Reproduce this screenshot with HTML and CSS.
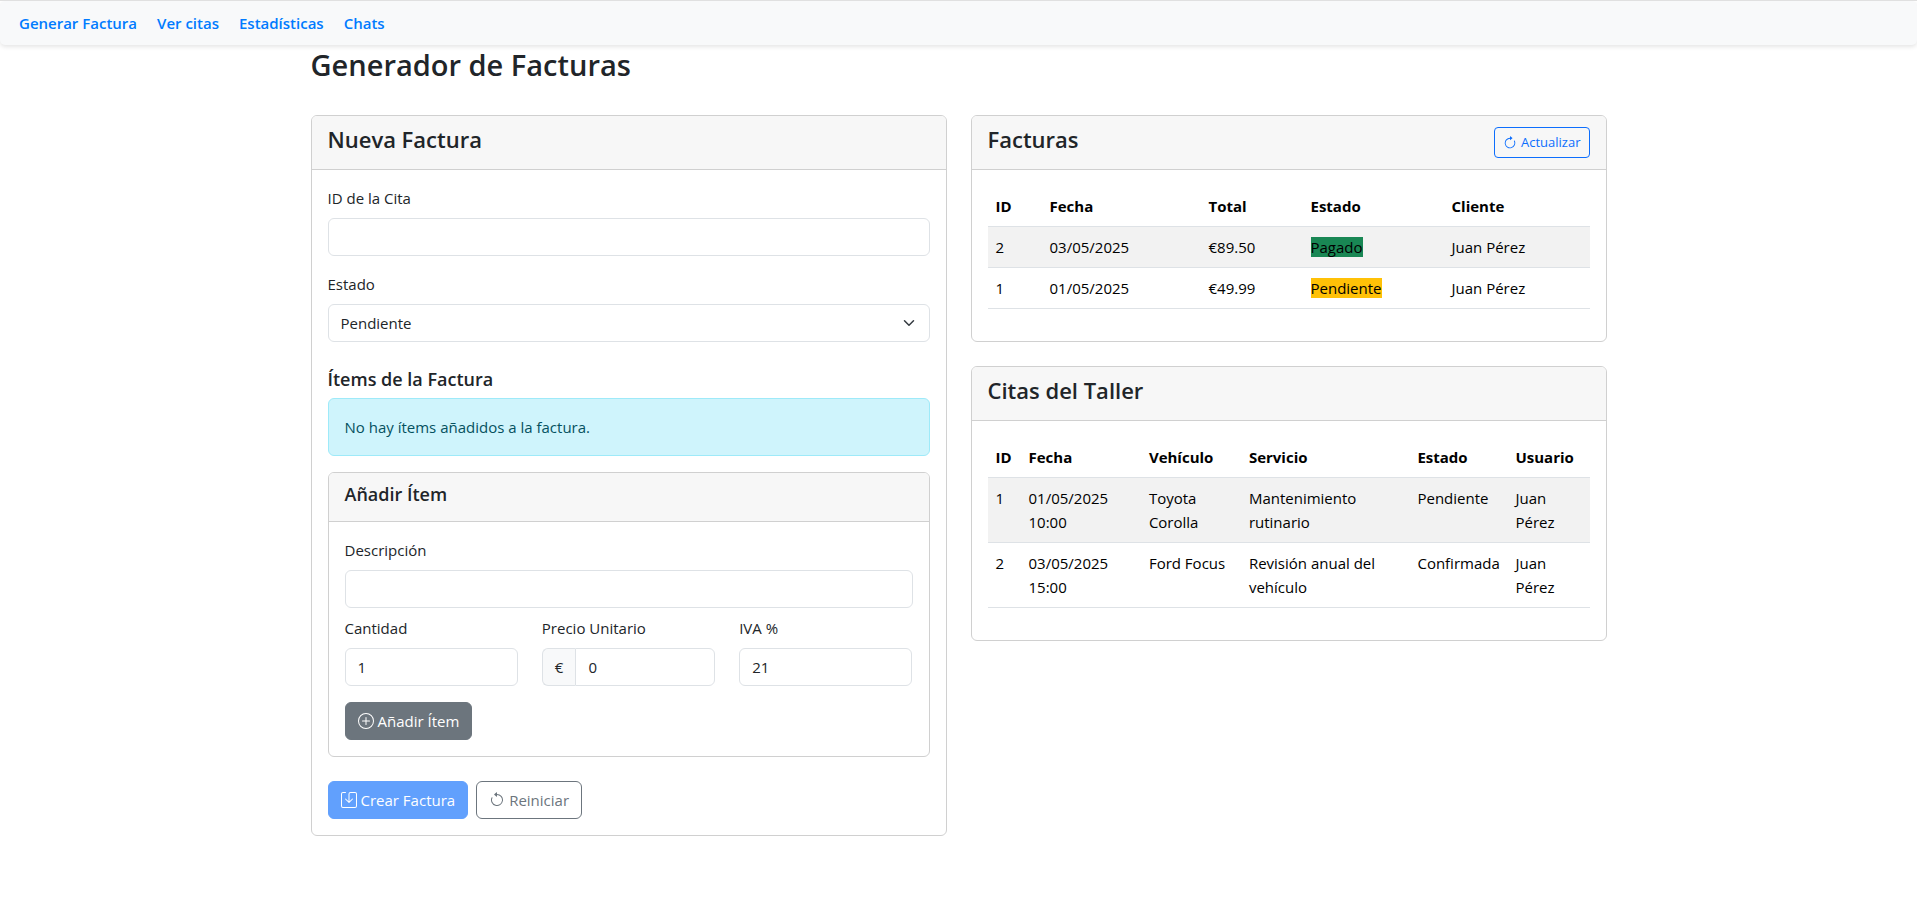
FILE: index.html
```html
<!DOCTYPE html>
<html lang="es">
<head>
<meta charset="utf-8">
<meta name="viewport" content="width=device-width, initial-scale=1">
<title>Generador de Facturas</title>
<link rel="stylesheet" href="styles.css">
</head>
<body>
<nav class="navbar">
  <a href="#generar">Generar Factura</a>
  <a href="#citas">Ver citas</a>
  <a href="#estadisticas">Estadísticas</a>
  <a href="#chats">Chats</a>
</nav>
<main class="container">
  <h1 class="page-title">Generador de Facturas</h1>
  <div class="row">
    <section class="card">
      <header class="card-header"><h2 class="card-title">Nueva Factura</h2></header>
      <form class="card-body">
        <div class="field">
          <label for="cita">ID de la Cita</label>
          <input class="control" id="cita" type="text">
        </div>
        <div class="field">
          <label for="estado">Estado</label>
          <div class="select-wrap">
            <select class="control select" id="estado">
              <option>Pendiente</option>
              <option>Pagado</option>
            </select>
            <svg class="chevron" viewBox="0 0 16 16" aria-hidden="true"><path fill="none" stroke="#343a40" stroke-linecap="round" stroke-linejoin="round" stroke-width="2" d="m2 5 6 6 6-6"/></svg>
          </div>
        </div>
        <div class="items">
          <h3 class="subtitle">Ítems de la Factura</h3>
          <div class="alert">No hay ítems añadidos a la factura.</div>
          <div class="card">
            <header class="card-header"><h3 class="subtitle">Añadir Ítem</h3></header>
            <div class="card-body">
              <div class="field field-tight">
                <label for="descripcion">Descripción</label>
                <input class="control" id="descripcion" type="text">
              </div>
              <div class="field-row">
                <div class="field">
                  <label for="cantidad">Cantidad</label>
                  <input class="control" id="cantidad" type="text" inputmode="numeric" value="1">
                </div>
                <div class="field">
                  <label for="precio">Precio Unitario</label>
                  <div class="input-group">
                    <span class="input-addon">€</span>
                    <input class="control" id="precio" type="text" inputmode="decimal" value="0">
                  </div>
                </div>
                <div class="field">
                  <label for="iva">IVA %</label>
                  <input class="control" id="iva" type="text" inputmode="decimal" value="21">
                </div>
              </div>
              <button class="btn btn-secondary" type="button">
                <svg class="icon" viewBox="0 0 16 16" aria-hidden="true"><path d="M8 15A7 7 0 1 1 8 1a7 7 0 0 1 0 14m0 1A8 8 0 1 0 8 0a8 8 0 0 0 0 16"/><path d="M8 4a.5.5 0 0 1 .5.5v3h3a.5.5 0 0 1 0 1h-3v3a.5.5 0 0 1-1 0v-3h-3a.5.5 0 0 1 0-1h3v-3A.5.5 0 0 1 8 4"/></svg>
                Añadir Ítem
              </button>
            </div>
          </div>
        </div>
        <div class="actions">
          <button class="btn btn-primary" type="submit" disabled>
            <svg class="icon" viewBox="0 0 16 16" aria-hidden="true"><path d="M2 1a1 1 0 0 0-1 1v12a1 1 0 0 0 1 1h12a1 1 0 0 0 1-1V2a1 1 0 0 0-1-1H9.500a1 1 0 0 0-1 1v7.293l2.646-2.647a.5.5 0 0 1 .708.708l-3.500 3.500a.5.5 0 0 1-.708 0l-3.500-3.500a.5.5 0 1 1 .708-.708L7.500 9.293V2a2 2 0 0 1 2-2H14a2 2 0 0 1 2 2v12a2 2 0 0 1-2 2H2a2 2 0 0 1-2-2V2a2 2 0 0 1 2-2h2.500a.5.5 0 0 1 0 1z"/></svg>
            Crear Factura
          </button>
          <button class="btn btn-outline-secondary" type="reset">
            <svg class="icon" viewBox="0 0 16 16" aria-hidden="true"><path fill-rule="evenodd" d="M8 3a5 5 0 1 1-4.546 2.914.5.5 0 0 0-.908-.417A6 6 0 1 0 8 2z"/><path d="M8 4.466V.534a.25.25 0 0 0-.41-.192L5.230 2.308a.25.25 0 0 0 0 .384l2.360 1.966A.25.25 0 0 0 8 4.466"/></svg>
            Reiniciar
          </button>
        </div>
      </form>
    </section>

    <div class="column">
      <section class="card">
        <header class="card-header">
          <h2 class="card-title">Facturas</h2>
          <button class="btn btn-sm btn-outline-primary" type="button">
            <svg class="icon" viewBox="0 0 16 16" aria-hidden="true"><path fill-rule="evenodd" d="M8 3a5 5 0 1 0 4.546 2.914.5.5 0 0 1 .908-.417A6 6 0 1 1 8 2z"/><path d="M8 4.466V.534a.25.25 0 0 1 .41-.192l2.360 1.966c.12.1.12.284 0 .384L8.410 4.658A.25.25 0 0 1 8 4.466"/></svg>
            Actualizar
          </button>
        </header>
        <div class="card-body">
          <table class="table invoices">
            <thead>
              <tr><th scope="col">ID</th><th scope="col">Fecha</th><th scope="col">Total</th><th scope="col">Estado</th><th scope="col">Cliente</th></tr>
            </thead>
            <tbody>
              <tr><td>2</td><td>03/05/2025</td><td>€89.50</td><td><span class="bg-success">Pagado</span></td><td>Juan Pérez</td></tr>
              <tr><td>1</td><td>01/05/2025</td><td>€49.99</td><td><span class="bg-warning">Pendiente</span></td><td>Juan Pérez</td></tr>
            </tbody>
          </table>
        </div>
      </section>
      <section class="card">
        <header class="card-header"><h2 class="card-title">Citas del Taller</h2></header>
        <div class="card-body">
          <table class="table appointments">
            <thead>
              <tr><th scope="col">ID</th><th scope="col">Fecha</th><th scope="col">Vehículo</th><th scope="col">Servicio</th><th scope="col">Estado</th><th scope="col">Usuario</th></tr>
            </thead>
            <tbody>
              <tr><td>1</td><td>01/05/2025 10:00</td><td>Toyota Corolla</td><td>Mantenimiento rutinario</td><td>Pendiente</td><td>Juan Pérez</td></tr>
              <tr><td>2</td><td>03/05/2025 15:00</td><td>Ford Focus</td><td>Revisión anual del vehículo</td><td>Confirmada</td><td>Juan Pérez</td></tr>
            </tbody>
          </table>
        </div>
      </section>
    </div>
  </div>
</main>
</body>
</html>
```
FILE: styles.css
```css
*, *::before, *::after { box-sizing: border-box; }

body {
  margin: 0;
  border-top: 1px solid #e0e0e0;
  background: #fff;
  color: #212529;
  font-family: "Segoe UI", "Open Sans", "Noto Sans", sans-serif;
  font-size: 15px;
  line-height: 24px;
}

h1, h2, h3 { margin: 0; font-weight: 600; }

.navbar {
  display: flex;
  gap: 20px;
  padding: 10px 19px;
  border-radius: 5px;
  background: #f8f9fa;
  box-shadow: 0 2px 4px rgba(0, 0, 0, .1);
}
.navbar a {
  color: #007bff;
  font-weight: 600;
  font-size: 15px;
  text-decoration: none;
}

.container {
  max-width: 1320px;
  margin: 0 auto;
  padding: 0 12px;
}
.page-title {
  margin-bottom: 30px;
  font-size: 29px;
  line-height: 40px;
}

.row {
  display: grid;
  grid-template-columns: 1fr 1fr;
  align-items: start;
  gap: 24px;
}
.column { display: grid; gap: 24px; }

.card {
  border: 1px solid #d0d0d0;
  border-radius: 6px;
  background: #fff;
}
.card-header {
  display: flex;
  justify-content: space-between;
  align-items: center;
  padding: 8px 16px;
  border-bottom: 1px solid #d0d0d0;
  border-radius: 5px 5px 0 0;
  background: #f7f7f7;
}
.card-title {
  margin-bottom: 6px;
  font-size: 22px;
  line-height: 31px;
}
.subtitle {
  margin-bottom: 6px;
  font-size: 18px;
  line-height: 26px;
}
.card-body { padding: 16px; }

.field { margin-bottom: 16px; }
.field-tight { margin-bottom: 8px; }
.field label {
  display: block;
  margin-bottom: 8px;
}
.field-row {
  display: grid;
  grid-template-columns: repeat(3, minmax(0, 1fr));
  gap: 24px;
}

.control {
  display: block;
  width: 100%;
  min-width: 0;
  height: 38px;
  padding: 6px 12px;
  border: 1px solid #dee2e6;
  border-radius: 6px;
  background: #fff;
  color: #212529;
  font: inherit;
}
.select-wrap { position: relative; }
.select { appearance: none; }
.chevron {
  position: absolute;
  top: 13px;
  right: 13px;
  width: 16px;
  height: 12px;
  pointer-events: none;
}
.input-group { display: flex; }
.input-addon {
  padding: 6px 12px;
  border: 1px solid #dee2e6;
  border-right: 0;
  border-radius: 6px 0 0 6px;
  background: #f8f9fa;
}
.input-group .control {
  flex: 1;
  border-radius: 0 6px 6px 0;
}

.items { margin: 24px 0; }
.alert {
  margin-bottom: 16px;
  padding: 16px;
  border: 1px solid #9eeaf9;
  border-radius: 6px;
  background: #cff4fc;
  color: #055160;
}

.btn {
  display: inline-flex;
  align-items: center;
  gap: 4px;
  padding: 6px 12px;
  border: 1px solid transparent;
  border-radius: 6px;
  font: inherit;
}
.icon {
  width: 16px;
  height: 16px;
  fill: currentColor;
}
.btn-sm {
  padding: 4px 8px;
  border-radius: 4px;
  font-size: 13px;
  line-height: 21px;
}
.btn-sm .icon { width: 14px; height: 14px; }
.btn-secondary { border-color: #6c757d; background: #6c757d; color: #fff; }
.btn-primary { border-color: #0d6efd; background: #0d6efd; color: #fff; }
.btn-primary:disabled { opacity: .65; }
.btn-outline-secondary { border-color: #6c757d; background: transparent; color: #6c757d; }
.btn-outline-primary { border-color: #0d6efd; background: transparent; color: #0d6efd; }
.actions { display: flex; gap: 8px; }

.table {
  width: 100%;
  margin-bottom: 16px;
  border-collapse: collapse;
  table-layout: fixed;
  color: #000;
}
.table th, .table td {
  padding: 8px;
  border-bottom: 1px solid #dee2e6;
  text-align: left;
  vertical-align: top;
}
.table th { font-weight: 700; }
.table tbody tr:nth-child(odd) { background: #f2f2f2; }
.bg-success { background: #198754; }
.bg-warning { background: #ffc107; }

.invoices th:nth-child(1) { width: 54px; }
.invoices th:nth-child(2) { width: 159px; }
.invoices th:nth-child(3) { width: 102px; }
.invoices th:nth-child(4) { width: 141px; }
.appointments th:nth-child(1) { width: 33px; }
.appointments th:nth-child(2) { width: 20%; }
.appointments th:nth-child(3) { width: 100px; }
.appointments th:nth-child(4) { width: 28%; }
.appointments th:nth-child(5) { width: 98px; }

@media (max-width: 900px) {
  .row { grid-template-columns: minmax(0, 1fr); }
}
```
